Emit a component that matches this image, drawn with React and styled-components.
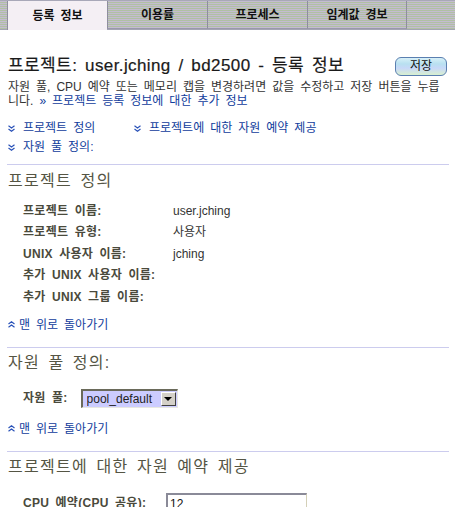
import React from "react";
import styled, { createGlobalStyle } from "styled-components";

const Global = createGlobalStyle`
  html, body { margin: 0; padding: 0; background: #fff; }
  body {
    font-family: "Liberation Sans", "Noto Sans CJK KR", sans-serif;
    font-size: 12px;
    color: #333;
    word-spacing: 0.22em;
  }
`;

const TabBar = styled.div`
  display: flex;
  height: 28px;
  padding-left: 7px;
  background: repeating-linear-gradient(180deg, #c4bcd0 0px, #c4bcd0 1px, #b0c0a4 1px, #b0c0a4 2px);
  border-bottom: 1px solid #a4a4b4;
  border-top: 1px solid #a8a8b8;
`;

const Tab = styled.div`
  width: 100px;
  height: ${p => (p.$active ? "29px" : "28px")};
  box-sizing: border-box;
  display: flex;
  align-items: center;
  justify-content: center;
  font-weight: bold;
  font-size: 12px;
  line-height: 14px;
  color: #111;
  border-left: 1px solid #8e8e9e;
  border-right: ${p => (p.$last ? "1px solid #8e8e9e" : "none")};
  border-bottom: ${p => (p.$active ? "none" : "1px solid #9a9aaa")};
  background: ${p => (p.$active ? "#f4eff4" : "transparent")};
  margin-bottom: ${p => (p.$active ? "-1px" : "0")};
  position: relative;
`;

const Content = styled.div`
  padding: 0 7px 0 8px;
`;

const Header = styled.div`
  display: flex;
  align-items: center;
  justify-content: space-between;
  margin-top: 26px;
  height: 20px;
`;

const Title = styled.h1`
  margin: 0;
  font-size: 17px;
  font-weight: normal;
  color: #1a1a1a;
  line-height: 20px;
  height: 20px;
  letter-spacing: 0.4px;
  -webkit-text-stroke: 0.2px #1a1a1a;
`;

const SaveButton = styled.button`
  width: 52px;
  height: 19px;
  margin-right: 1px;
  border: 1px solid #5a7fb0;
  border-radius: 6px;
  background: linear-gradient(180deg, #d8f0f8 0%, #b8e0f0 35%, #c8d8f8 60%, #d8f0d0 100%);
  font-family: "Liberation Sans", "Noto Sans CJK KR", sans-serif;
  font-size: 12px;
  color: #111;
  padding: 0;
  line-height: 17px;
`;

const Desc = styled.p`
  margin: 4px 0 0;
  font-size: 12px;
  line-height: 14px;
  height: 28px;
  color: #333;
`;

const Link = styled.a`
  color: #103c9c;
  text-decoration: none;
  cursor: pointer;
`;

const JumpGrid = styled.div`
  display: grid;
  grid-template-columns: 126px auto;
  grid-auto-rows: 14px;
  row-gap: 5px;
  margin-top: 13px;
`;

const JumpLink = styled(Link)`
  display: flex;
  align-items: center;
  gap: 8px;
  font-size: 12px;
  line-height: 14px;
  height: 14px;
`;

const Chevron = ({ up }) => (
  <svg width="7" height="7" viewBox="0 0 7 7" style={{ flex: "none" }}>
    <g fill="none" stroke="#2a52b8" strokeWidth="1.2" transform={up ? "rotate(180 3.5 3.5)" : undefined}>
      <polyline points="0.5,0.8 3.5,3 6.5,0.8" />
      <polyline points="0.5,4 3.5,6.2 6.5,4" />
    </g>
  </svg>
);

const Rule = styled.hr`
  border: none;
  border-top: 1px solid #ccccee;
  height: 0;
  margin: ${p => p.$top}px -1px 0 -1px;
`;

const SectionTitle = styled.h2`
  margin: ${p => p.$top || 7}px 0 0;
  font-size: 16px;
  font-weight: normal;
  color: #555544;
  line-height: 18px;
  height: 18px;
  letter-spacing: 1.3px;
`;

const Rows = styled.div`
  display: grid;
  grid-template-columns: 150px auto;
  grid-auto-rows: 21.5px;
  align-items: center;
  margin: ${p => p.$top}px 0 0 15px;
`;

const Label = styled.div`
  font-weight: bold;
  color: #4a4a3c;
  font-size: 12px;
  line-height: 14px;
  letter-spacing: 0.3px;
`;

const Value = styled.div`
  color: #333;
  font-size: 12px;
  line-height: 14px;
`;

const BackLink = styled(JumpLink)`
  gap: 4px;
  margin-top: ${p => p.$top}px;
`;

const PoolRow = styled.div`
  display: flex;
  align-items: center;
  gap: 13px;
  height: 19px;
  margin: 17px 0 0 15px;
`;

const SelectWrap = styled.span`
  position: relative;
  display: inline-block;
  width: 97px;
  height: 19px;
`;

const Select = styled.select`
  appearance: none;
  width: 100%;
  height: 100%;
  box-sizing: border-box;
  background: #ccccff;
  border: none;
  border-top: 2px solid #6a6a5a;
  border-left: 2px solid #6a6a5a;
  border-right: 1px solid #e8e8e0;
  border-bottom: 1px solid #e8e8e0;
  padding: 0 0 0 4px;
  font-family: "Liberation Sans", sans-serif;
  font-size: 12px;
  color: #222;
  outline: none;
`;

const Arrow = styled.span`
  position: absolute;
  right: 2px;
  top: 3px;
  width: 15px;
  height: 14px;
  box-sizing: border-box;
  background: #d4d0c8;
  border-top: 1px solid #fff;
  border-left: 1px solid #fff;
  border-right: 1px solid #404040;
  border-bottom: 1px solid #404040;
  display: flex;
  align-items: center;
  justify-content: center;
  pointer-events: none;
  &::after {
    content: "";
    border-left: 4px solid transparent;
    border-right: 4px solid transparent;
    border-top: 4px solid #000;
  }
`;

const TextInput = styled.input`
  width: 141px;
  height: 20px;
  box-sizing: border-box;
  border: none;
  border-top: 2px solid #8a8a98;
  border-left: 2px solid #8a8a98;
  border-right: 1px solid #d4d0b8;
  border-bottom: 1px solid #d4d0b8;
  padding: 2px 2px 0;
  font-family: "Liberation Sans", sans-serif;
  font-size: 12px;
  color: #111;
  outline: none;
`;

const CpuRow = styled.div`
  display: grid;
  grid-template-columns: 143px auto;
  align-items: center;
  height: 20px;
  margin: 17px 0 0 15px;
`;

export default function App() {
  const tabs = ["등록 정보", "이용률", "프로세스", "임계값 경보"];
  return (
    <>
      <Global />
      <TabBar>
        {tabs.map((t, i) => (
          <Tab key={t} $active={i === 0} $last={i === tabs.length - 1}>{t}</Tab>
        ))}
      </TabBar>
      <Content>
        <Header>
          <Title>프로젝트: user.jching / bd2500 - 등록 정보</Title>
          <SaveButton>저장</SaveButton>
        </Header>
        <Desc>
          자원 풀, CPU 예약 또는 메모리 캡을 변경하려면 값을 수정하고 저장 버튼을 누릅니다.{" "}
          <Link>» 프로젝트 등록 정보에 대한 추가 정보</Link>
        </Desc>
        <JumpGrid>
          <JumpLink><Chevron />프로젝트 정의</JumpLink>
          <JumpLink><Chevron />프로젝트에 대한 자원 예약 제공</JumpLink>
          <JumpLink><Chevron />자원 풀 정의:</JumpLink>
        </JumpGrid>
        <Rule $top={10} />
        <SectionTitle $top={7}>프로젝트 정의</SectionTitle>
        <Rows $top={10}>
          <Label>프로젝트 이름:</Label><Value>user.jching</Value>
          <Label>프로젝트 유형:</Label><Value>사용자</Value>
          <Label>UNIX 사용자 이름:</Label><Value>jching</Value>
          <Label>추가 UNIX 사용자 이름:</Label><Value></Value>
          <Label>추가 UNIX 그룹 이름:</Label><Value></Value>
        </Rows>
        <BackLink $top={10}><Chevron up />맨 위로 돌아가기</BackLink>
        <Rule $top={15} />
        <SectionTitle $top={6}>자원 풀 정의:</SectionTitle>
        <PoolRow>
          <Label>자원 풀:</Label>
          <SelectWrap>
            <Select defaultValue="pool_default">
              <option value="pool_default">pool_default</option>
            </Select>
            <Arrow />
          </SelectWrap>
        </PoolRow>
        <BackLink $top={14}><Chevron up />맨 위로 돌아가기</BackLink>
        <Rule $top={15} />
        <SectionTitle $top={6}>프로젝트에 대한 자원 예약 제공</SectionTitle>
        <CpuRow>
          <Label>CPU 예약(CPU 공유):</Label>
          <TextInput defaultValue="12" />
        </CpuRow>
      </Content>
    </>
  );
}
